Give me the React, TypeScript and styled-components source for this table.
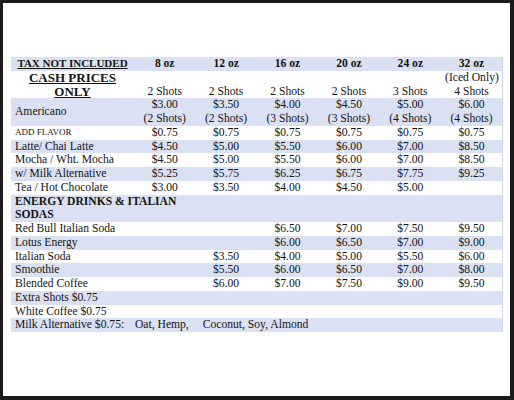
import * as React from 'react';
import styled, {createGlobalStyle} from 'styled-components';

const bandColor = '#dae1f2';
const inkColor = '#141414';

const GlobalStyle = createGlobalStyle`
  html, body {
    margin: 0;
    padding: 0;
    background: #ffffff;
  }
`;

// The photo of the price sheet has a dark frame round it:
const Frame = styled.div`
  box-sizing: border-box;
  width: 514px;
  height: 400px;
  border-style: solid;
  border-color: #1b1b1b;
  border-width: 3px 4px 4px 3px;
  background: #ffffff;
  padding: 54px 0 0 8px;
  font-family: "Liberation Serif", "Times New Roman", serif;
  color: ${inkColor};
`;

const Sheet = styled.table`
  width: 492px;
  table-layout: fixed;
  border-collapse: collapse;
  border-spacing: 0;
  font-size: 11.6px;
  line-height: 13.75px;
  border-right: 1px solid #cdd4e6;
`;

const Row = styled.tr<{$shaded: boolean}>`
  background: ${p => (p.$shaded ? bandColor : '#ffffff')};
`;

const Cell = styled.td<{$align?: 'left' | 'center'; $valign?: 'middle' | 'bottom'}>`
  padding: 0 4px;
  text-align: ${p => p.$align || 'center'};
  vertical-align: ${p => p.$valign || 'middle'};
  white-space: nowrap;
  overflow: visible;
`;

const LabelCell = styled(Cell).attrs({$align: 'left'})``;

const WrapLabel = styled(LabelCell)`
  white-space: normal;
  font-weight: bold;
`;

const HeadCell = styled(Cell)`
  font-weight: bold;
  font-size: 11.6px;
`;

const TaxNote = styled(HeadCell)`
  font-size: 11px;
  text-decoration: underline;
`;

const CashNote = styled(Cell)`
  font-weight: bold;
  font-size: 13px;
  text-decoration: underline;
  white-space: normal;
`;

const SmallCaps = styled(LabelCell)`
  font-size: 9px;
`;

const OptionsCell = styled(LabelCell)`
  padding-left: 1px;
`;

const Gap = styled.span`
  margin-left: 14px;
`;

const sizes = ['8 oz', '12 oz', '16 oz', '20 oz', '24 oz', '32 oz'];

interface IPriceRow {
  label: string;
  prices: string[];
}

const coffeeRows: IPriceRow[] = [
  {label: 'Latte/ Chai Latte', prices: ['$4.50', '$5.00', '$5.50', '$6.00', '$7.00', '$8.50']},
  {label: 'Mocha / Wht. Mocha', prices: ['$4.50', '$5.00', '$5.50', '$6.00', '$7.00', '$8.50']},
  {label: 'w/ Milk Alternative', prices: ['$5.25', '$5.75', '$6.25', '$6.75', '$7.75', '$9.25']},
  {label: 'Tea / Hot Chocolate', prices: ['$3.00', '$3.50', '$4.00', '$4.50', '$5.00', '']},
];

const sodaRows: IPriceRow[] = [
  {label: 'Red Bull Italian Soda', prices: ['', '', '$6.50', '$7.00', '$7.50', '$9.50']},
  {label: 'Lotus Energy', prices: ['', '', '$6.00', '$6.50', '$7.00', '$9.00']},
  {label: 'Italian Soda', prices: ['', '$3.50', '$4.00', '$5.00', '$5.50', '$6.00']},
  {label: 'Smoothie', prices: ['', '$5.50', '$6.00', '$6.50', '$7.00', '$8.00']},
  {label: 'Blended Coffee', prices: ['', '$6.00', '$7.00', '$7.50', '$9.00', '$9.50']},
];

const americano = [
  ['$3.00', '2 Shots'],
  ['$3.50', '2 Shots'],
  ['$4.00', '3 Shots'],
  ['$4.50', '3 Shots'],
  ['$5.00', '4 Shots'],
  ['$6.00', '4 Shots'],
];

const renderPrices = (prices: string[]) =>
  prices.map((price, i) => <Cell key={i}>{price}</Cell>);

export default function App() {
  // rows alternate blue / white starting with the header band
  let rowIndex = 0;
  const shade = () => rowIndex++ % 2 === 0;

  return (
    <>
      <GlobalStyle />
      <Frame>
        <Sheet>
          <colgroup>
            <col style={{width: 123}} />
            {sizes.map(size => <col key={size} />)}
          </colgroup>
          <tbody>
            <Row $shaded={shade()}>
              <TaxNote>TAX NOT INCLUDED</TaxNote>
              {sizes.map(size => <HeadCell key={size}>{size}</HeadCell>)}
            </Row>
            <Row $shaded={shade()}>
              <CashNote>CASH PRICES ONLY</CashNote>
              <Cell $valign='bottom'>2 Shots</Cell>
              <Cell $valign='bottom'>2 Shots</Cell>
              <Cell $valign='bottom'>2 Shots</Cell>
              <Cell $valign='bottom'>2 Shots</Cell>
              <Cell $valign='bottom'>3 Shots</Cell>
              <Cell $valign='bottom'>(Iced Only)<br />4 Shots</Cell>
            </Row>
            <Row $shaded={shade()}>
              <LabelCell>Americano</LabelCell>
              {americano.map(([price, shots], i) => (
                <Cell key={i}>{price}<br />({shots})</Cell>
              ))}
            </Row>
            <Row $shaded={shade()}>
              <SmallCaps>ADD FLAVOR</SmallCaps>
              {renderPrices(['$0.75', '$0.75', '$0.75', '$0.75', '$0.75', '$0.75'])}
            </Row>
            {coffeeRows.map(({label, prices}) => (
              <Row key={label} $shaded={shade()}>
                <LabelCell>{label}</LabelCell>
                {renderPrices(prices)}
              </Row>
            ))}
            <Row $shaded={shade()}>
              <WrapLabel colSpan={2}>ENERGY DRINKS &amp; ITALIAN SODAS</WrapLabel>
              {renderPrices(['', '', '', '', ''])}
            </Row>
            {sodaRows.map(({label, prices}) => (
              <Row key={label} $shaded={shade()}>
                <LabelCell>{label}</LabelCell>
                {renderPrices(prices)}
              </Row>
            ))}
            <Row $shaded={shade()}>
              <LabelCell colSpan={7}>Extra Shots $0.75</LabelCell>
            </Row>
            <Row $shaded={shade()}>
              <LabelCell colSpan={7}>White Coffee $0.75</LabelCell>
            </Row>
            <Row $shaded={shade()}>
              <LabelCell>Milk Alternative $0.75:</LabelCell>
              <OptionsCell colSpan={6}>
                Oat, Hemp,<Gap>Coconut, Soy, Almond</Gap>
              </OptionsCell>
            </Row>
          </tbody>
        </Sheet>
      </Frame>
    </>
  );
}
